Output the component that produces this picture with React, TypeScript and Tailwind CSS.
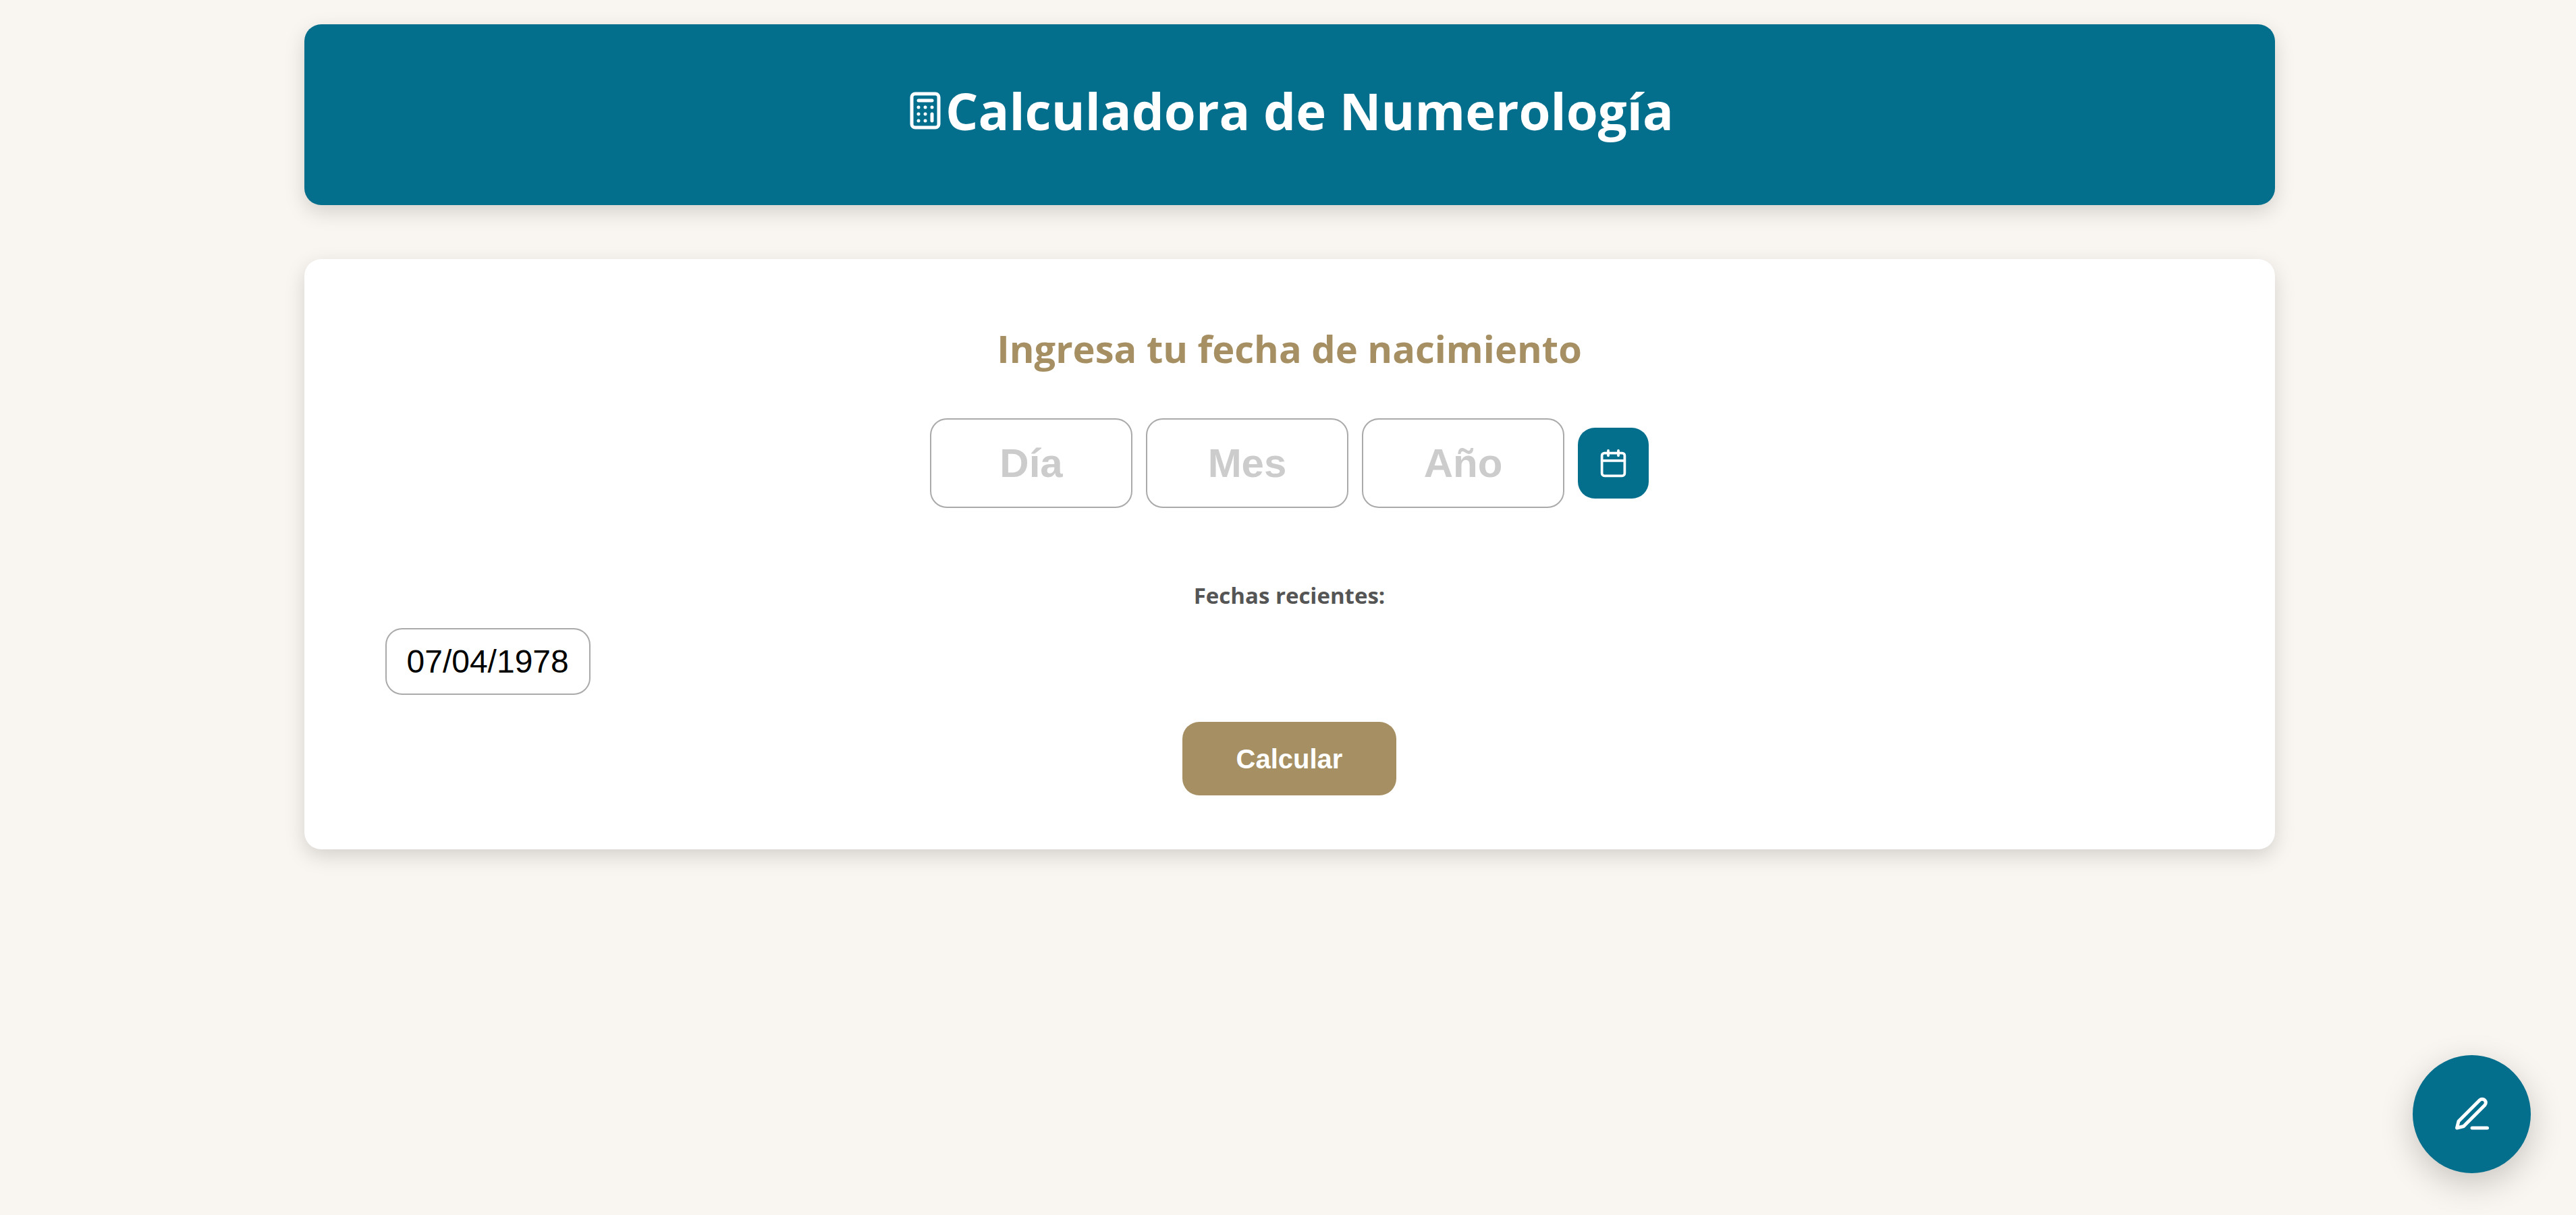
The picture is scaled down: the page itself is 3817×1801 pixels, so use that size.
import { useState } from "react";
import { Calculator, Calendar } from "lucide-react";
import { FiEdit3 } from "react-icons/fi";

type DateField = { id: string; label: string };

const dateFields: DateField[] = [
  { id: "dia", label: "Día" },
  { id: "mes", label: "Mes" },
  { id: "anio", label: "Año" },
];

const recentDates = ["07/04/1978"];

export default function App() {
  const [values, setValues] = useState<Record<string, string>>({});

  const fillFrom = (date: string) => {
    const [dia, mes, anio] = date.split("/");
    setValues({ dia, mes, anio });
  };

  return (
    <div className="min-h-screen bg-[#f9f5f0] py-9 pr-10 pl-11 font-['Open_Sans','Noto_Sans',sans-serif]">
      <div className="mx-auto flex max-w-[2920px] flex-col gap-20">
        <header className="flex items-center justify-center rounded-[25px] bg-[#036f8d] px-20 pt-[74px] pb-[86px] text-white shadow-[0_10px_30px_rgba(0,0,0,0.15)]">
          <Calculator className="size-[60px]" aria-hidden="true" />
          <h1 className="text-[76px] leading-[108px] font-bold">Calculadora de Numerología</h1>
        </header>

        <main className="flex flex-col items-center rounded-[25px] bg-white px-30 py-20 shadow-[0_10px_30px_rgba(0,0,0,0.15)]">
          <h2 className="mt-3 text-[56px] leading-[80px] font-bold text-[#a69063]">
            Ingresa tu fecha de nacimiento
          </h2>

          <div className="mt-16 flex items-center gap-5">
            {dateFields.map(({ id, label }) => (
              <input
                key={id}
                id={id}
                aria-label={label}
                placeholder={label}
                inputMode="numeric"
                value={values[id] ?? ""}
                onChange={(e) => setValues({ ...values, [id]: e.target.value })}
                className="h-[133px] w-[300px] rounded-[25px] border-2 border-[#aaaaaa] bg-white text-center font-['Liberation_Sans',Arial,sans-serif] text-[60px] font-bold text-black placeholder:text-[#cccccc]"
              />
            ))}
            <button
              type="button"
              aria-label="Abrir calendario"
              className="flex size-[105px] items-center justify-center rounded-[25px] bg-[#036f8d] text-white"
            >
              <Calendar className="size-[45px]" />
            </button>
          </div>

          <h3 className="mt-[105px] text-[33px] leading-[50px] font-bold text-[#555555]">Fechas recientes:</h3>

          <ul className="mt-[23px] flex w-full flex-wrap gap-5">
            {recentDates.map((date) => (
              <li key={date}>
                <button
                  type="button"
                  onClick={() => fillFrom(date)}
                  className="block h-[99px] rounded-[25px] border-2 border-[#aaaaaa] bg-white px-[30px] font-['Liberation_Sans',Arial,sans-serif] text-5xl text-black"
                >
                  {date}
                </button>
              </li>
            ))}
          </ul>

          <button
            type="button"
            className="mt-10 h-[109px] rounded-[25px] bg-[#a69063] px-20 font-['Liberation_Sans',Arial,sans-serif] text-[40px] font-bold text-white"
          >
            Calcular
          </button>
        </main>
      </div>

      <button
        type="button"
        aria-label="Editar"
        className="fixed right-[67px] bottom-[62px] flex size-[175px] items-center justify-center rounded-full bg-[#036f8d] text-white shadow-[0_15px_50px_rgba(0,0,0,0.2)]"
      >
        <FiEdit3 className="size-[60px]" />
      </button>
    </div>
  );
}
